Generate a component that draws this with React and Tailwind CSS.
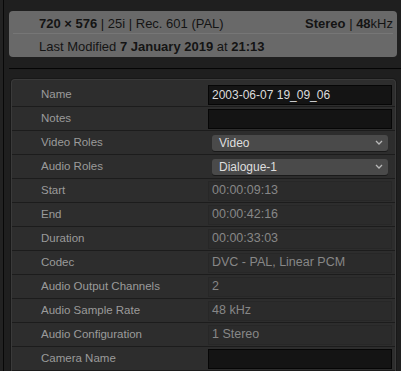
import React from "react";

const font = { fontFamily: '"Liberation Sans", Arial, sans-serif' };

function Chevron() {
  return (
    <svg width="8" height="5" viewBox="0 0 8 5" className="shrink-0">
      <path d="M1 1 L4 4 L7 1" fill="none" stroke="#b8b8b8" strokeWidth="1.3" />
    </svg>
  );
}

function Row({ label, children }) {
  return (
    <div className="flex h-[24px] items-center border-b border-[#1c1c1c]">
      <div className="w-[196px] shrink-0 pl-[29px] text-[11.5px] text-[#9b9b9b]">{label}</div>
      <div className="flex-1 pr-[3px]">{children}</div>
    </div>
  );
}

function DarkInput({ value }) {
  return (
    <div className="flex h-[20px] items-center border border-[#060606] bg-[#141414] pl-[3px] text-[12px] text-[#dcdcdc]">
      {value}
    </div>
  );
}

function ReadOnly({ value }) {
  return (
    <div className="flex h-[20px] items-center border border-[#272727] bg-[#2b2b2b] pl-[3px] text-[12.5px] text-[#878787]">
      {value}
    </div>
  );
}

function Select({ value }) {
  return (
    <div className="mx-[4px] flex h-[16px] items-center justify-between rounded-[3px] bg-[#4a4a4a] pl-[7px] pr-[5px] text-[12px] text-[#dedede] shadow-[0_1px_0_#1a1a1a]">
      <span>{value}</span>
      <Chevron />
    </div>
  );
}

export default function App() {
  return (
    <div className="flex h-[371px] w-[401px] overflow-hidden bg-[#1f1f1f]" style={font}>
      <div className="w-[3px] shrink-0 bg-[#222]" />
      <div className="w-px shrink-0 bg-[#080808]" />
      <div className="flex flex-1 flex-col">
        <div className="ml-[5px] mr-[4px] mt-[11px] h-[47px] rounded-[4px] bg-[#696969] text-[13px] text-[#141414]">
          <div className="mx-[4px] flex h-[23px] items-center justify-between border-b border-[#767676] pl-[26px] pt-[3px]">
            <span>
              <b>720 × 576</b> | 25i | Rec. 601 (PAL)
            </span>
            <span>
              <b>Stereo</b> | <b>48</b>kHz
            </span>
          </div>
          <div className="flex h-[23px] items-center pl-[30px] pt-[2px]">
            <span>
              Last Modified <b>7 January 2019</b> at <b>21:13</b>
            </span>
          </div>
        </div>
        <div className="ml-[5px] mt-[11px] h-px bg-[#050505]" />
        <div className="ml-[7px] mr-[5px] mt-[10px] flex-1 rounded-t-[4px] border border-b-0 border-[#3a3a3a] bg-[#2d2d2d] pt-[3px] shadow-[0_0_0_1px_#181818]">
          <Row label="Name"><DarkInput value="2003-06-07 19_09_06" /></Row>
          <Row label="Notes"><DarkInput value="" /></Row>
          <Row label="Video Roles"><Select value="Video" /></Row>
          <Row label="Audio Roles"><Select value="Dialogue-1" /></Row>
          <Row label="Start"><ReadOnly value="00:00:09:13" /></Row>
          <Row label="End"><ReadOnly value="00:00:42:16" /></Row>
          <Row label="Duration"><ReadOnly value="00:00:33:03" /></Row>
          <Row label="Codec"><ReadOnly value="DVC - PAL, Linear PCM" /></Row>
          <Row label="Audio Output Channels"><ReadOnly value="2" /></Row>
          <Row label="Audio Sample Rate"><ReadOnly value="48 kHz" /></Row>
          <Row label="Audio Configuration"><ReadOnly value="1 Stereo" /></Row>
          <Row label="Camera Name"><DarkInput value="" /></Row>
        </div>
      </div>
    </div>
  );
}
